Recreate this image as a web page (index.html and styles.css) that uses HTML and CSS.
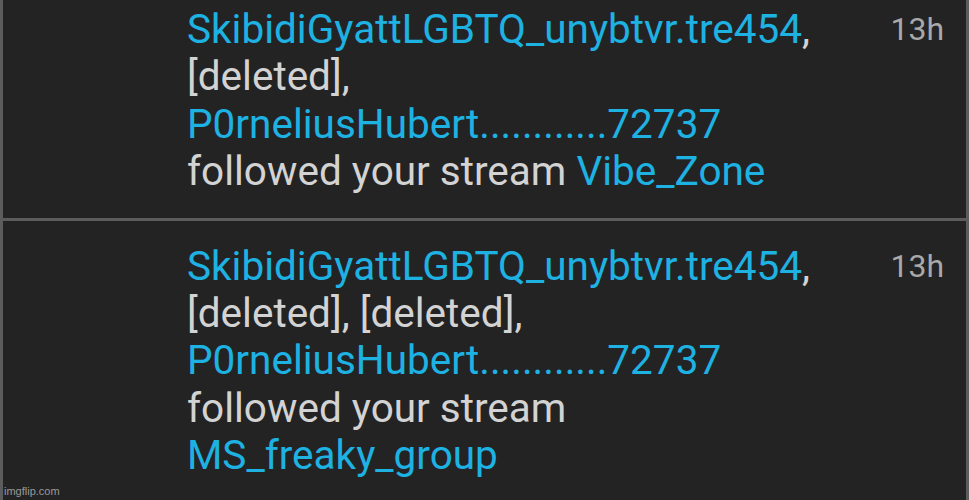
FILE: index.html
```html
<!DOCTYPE html>
<html lang="en">
<head>
  <meta charset="UTF-8" />
  <title>Notifications</title>
  <link rel="stylesheet" href="styles.css" />
</head>
<body>
  <div class="feed">
    <!-- follow notification -->
    <div class="note">
      <div class="avatar"></div>
      <p class="note-text">
        <a class="user">SkibidiGyattLGBTQ_unybtvr.tre454</a>,<br />
        [deleted],<br />
        <a class="user">P0rneliusHubert............72737</a><br />
        followed your stream <a class="user">Vibe_Zone</a>
      </p>
      <span class="time">13h</span>
    </div>

    <div class="note">
      <div class="avatar"></div>
      <p class="note-text">
        <a class="user">SkibidiGyattLGBTQ_unybtvr.tre454</a>,<br />
        [deleted], [deleted],<br />
        <a class="user">P0rneliusHubert............72737</a><br />
        followed your stream<br />
        <a class="user">MS_freaky_group</a>
      </p>
      <span class="time">13h</span>
    </div>
  </div>

  <span class="watermark">imgflip.com</span>
</body>
</html>
```

FILE: styles.css
```css
/* base */
html, body {
  margin: 0;
  height: 100%;
  overflow: hidden;
}

body {
  background-color: #232323;
  font-family: Roboto, "Noto Sans", sans-serif;
  color: #d3d3d3;
  position: relative;
}

/* list */
.feed {
  border-left: 3px solid #5c5c5c;
  border-right: 3px solid #5c5c5c;
  min-height: 100%;
  margin-top: -16px;
}

.note {
  display: grid;
  grid-template-columns: 184px 1fr auto;
  padding: 22px 22px 22px 0;
  border-bottom: 3px solid #5c5c5c;
}

.note:last-child {
  border-bottom: none;
}

.note-text {
  margin: 0;
  font-size: 40.5px;
  line-height: 47.4px;
}

.user {
  color: #1eb2e3;
  text-decoration: none;
}

.time {
  font-size: 32px;
  line-height: 47px;
  color: #a9a9a9;
}

/* watermark */
.watermark {
  position: absolute;
  left: 4px;
  bottom: 3px;
  font-family: "Liberation Sans", Arial, sans-serif;
  font-size: 11px;
  color: #9a9a9a;
}
```
